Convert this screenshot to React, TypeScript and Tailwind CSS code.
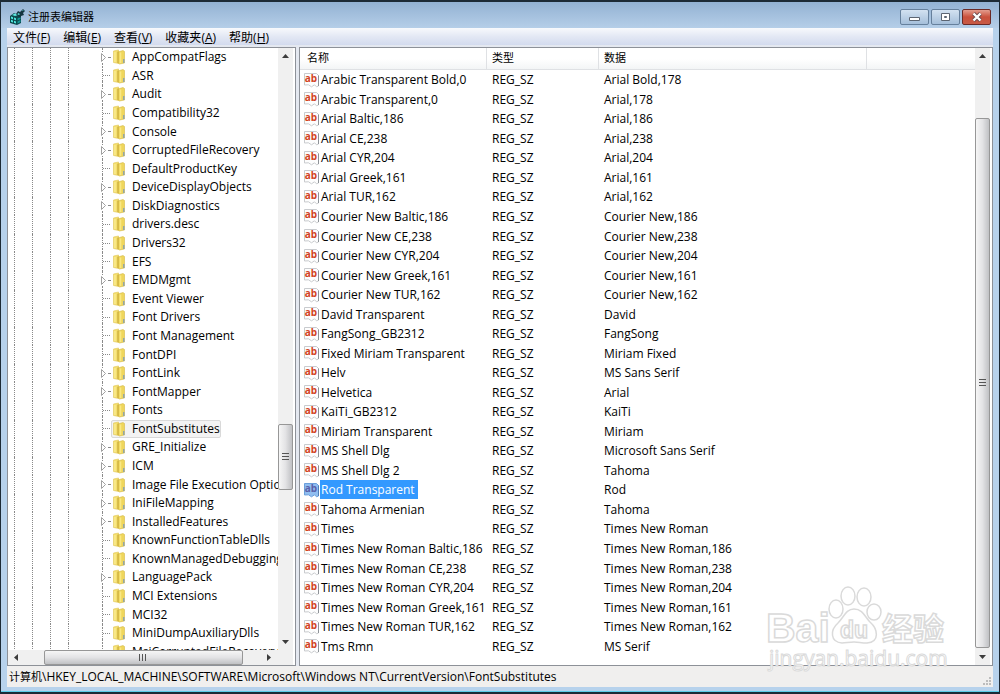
import { clsx } from "clsx";

type TreeItem = { name: string; expandable?: boolean };

const menus = [
  { label: "文件", key: "F" },
  { label: "编辑", key: "E" },
  { label: "查看", key: "V" },
  { label: "收藏夹", key: "A" },
  { label: "帮助", key: "H" },
];

const tree: TreeItem[] = [
  { name: "AppCompatFlags", expandable: true },
  { name: "ASR" },
  { name: "Audit", expandable: true },
  { name: "Compatibility32" },
  { name: "Console", expandable: true },
  { name: "CorruptedFileRecovery", expandable: true },
  { name: "DefaultProductKey" },
  { name: "DeviceDisplayObjects", expandable: true },
  { name: "DiskDiagnostics", expandable: true },
  { name: "drivers.desc" },
  { name: "Drivers32" },
  { name: "EFS" },
  { name: "EMDMgmt", expandable: true },
  { name: "Event Viewer" },
  { name: "Font Drivers" },
  { name: "Font Management" },
  { name: "FontDPI" },
  { name: "FontLink", expandable: true },
  { name: "FontMapper", expandable: true },
  { name: "Fonts" },
  { name: "FontSubstitutes" },
  { name: "GRE_Initialize", expandable: true },
  { name: "ICM", expandable: true },
  { name: "Image File Execution Options", expandable: true },
  { name: "IniFileMapping", expandable: true },
  { name: "InstalledFeatures", expandable: true },
  { name: "KnownFunctionTableDlls" },
  { name: "KnownManagedDebuggingDlls" },
  { name: "LanguagePack", expandable: true },
  { name: "MCI Extensions" },
  { name: "MCI32" },
  { name: "MiniDumpAuxiliaryDlls" },
  { name: "MsiCorruptedFileRecovery" },
];

const values: [string, string][] = [
  ["Arabic Transparent Bold,0", "Arial Bold,178"],
  ["Arabic Transparent,0", "Arial,178"],
  ["Arial Baltic,186", "Arial,186"],
  ["Arial CE,238", "Arial,238"],
  ["Arial CYR,204", "Arial,204"],
  ["Arial Greek,161", "Arial,161"],
  ["Arial TUR,162", "Arial,162"],
  ["Courier New Baltic,186", "Courier New,186"],
  ["Courier New CE,238", "Courier New,238"],
  ["Courier New CYR,204", "Courier New,204"],
  ["Courier New Greek,161", "Courier New,161"],
  ["Courier New TUR,162", "Courier New,162"],
  ["David Transparent", "David"],
  ["FangSong_GB2312", "FangSong"],
  ["Fixed Miriam Transparent", "Miriam Fixed"],
  ["Helv", "MS Sans Serif"],
  ["Helvetica", "Arial"],
  ["KaiTi_GB2312", "KaiTi"],
  ["Miriam Transparent", "Miriam"],
  ["MS Shell Dlg", "Microsoft Sans Serif"],
  ["MS Shell Dlg 2", "Tahoma"],
  ["Rod Transparent", "Rod"],
  ["Tahoma Armenian", "Tahoma"],
  ["Times", "Times New Roman"],
  ["Times New Roman Baltic,186", "Times New Roman,186"],
  ["Times New Roman CE,238", "Times New Roman,238"],
  ["Times New Roman CYR,204", "Times New Roman,204"],
  ["Times New Roman Greek,161", "Times New Roman,161"],
  ["Times New Roman TUR,162", "Times New Roman,162"],
  ["Tms Rmn", "MS Serif"],
];

function RegeditIcon() {
  return (
    <svg width="16" height="16" viewBox="0 0 16 16" className="shrink-0">
      <path d="M1 7l4-3 7 3v7l-4 2-7-2z" fill="#0b4a4e" />
      <path d="M2 7.5l2 .7v2l-2-.7zM5 8.5l2 .7v2l-2-.7zM2 10.8l2 .7v2l-2-.7zM5 11.800l2 .7v2l-2-.7z" fill="#4fe6de" />
      <path d="M8.5 9.500l3-1.5v2l-3 1.5zM8.5 12.500l3-1.5v2l-3 1.5z" fill="#149a98" />
      <path d="M3 6l3-1.500 3 1.500-3 1z" fill="#5fe8e0" />
      <path d="M7 5l2-3 2 1 3-3 2 2-2 2 1 2-3 1-1 2-2-2z" fill="#143640" />
      <path d="M9 4l2 1-1 1-1.500-.5zM13 2l1-1 .5 1z" fill="#57dcd6" />
    </svg>
  );
}

function FolderIcon() {
  return (
    <svg width="14" height="16" viewBox="0 0 14 16" className="shrink-0">
      <path d="M1.500 2l5-1v13.500l-5-1z" fill="#f4df6e" stroke="#e0c658" strokeWidth=".6" />
      <path d="M6 3l5-1.500 1.500 1V14l-5 1-1.500-1z" fill="#efd65c" stroke="#d3b848" strokeWidth=".6" />
      <path d="M6 2.500V14" stroke="#c9a937" />
      <path d="M3 3v10" stroke="#fcf0a0" />
      <path d="M8.500 3.500v10.500" stroke="#f9e885" strokeWidth="1.500" />
      <path d="M11 10h1.500v4H11z" fill="#93a6a6" />
    </svg>
  );
}

function StringIcon({ selected }: { selected: boolean }) {
  return (
    <svg width="16" height="16" viewBox="0 0 16 16" className="shrink-0">
      <path
        d="M.5 1.500h12l2 2V14l-2 .8-2-2-3 2-3-2-4 .2z"
        fill={selected ? "#8fbdf0" : "#fdfdfd"}
        stroke={selected ? "#6a9fdc" : "#c9cbce"}
      />
      <path d="M14.500 3.500v10.500" stroke={selected ? "#4f7fb8" : "#8e9297"} />
      <text
        x="7"
        y="10"
        textAnchor="middle"
        fontSize="10"
        fontWeight="700"
        fontFamily="Open Sans, sans-serif"
        fill={selected ? "#5a5fa8" : "#d2431f"}
      >
        ab
      </text>
    </svg>
  );
}

function Branch({ expandable }: { expandable?: boolean }) {
  return (
    <span className="flex w-[17px] shrink-0 flex-col self-stretch">
      <span className="ml-2 flex-1 border-l border-dotted border-[#8a8a8a]" />
      <svg width="17" height="11" viewBox="0 0 17 11">
        {expandable ? (
          <>
            <path d="M7.5 1.5v8l4-4z" fill="#fff" stroke="#a0a0a0" />
            <path d="M14 5.5h3" stroke="#8a8a8a" />
          </>
        ) : (
          <>
            <path d="M8.5 0v11" stroke="#8a8a8a" strokeDasharray="1 1" />
            <path d="M9 5.5h8" stroke="#8a8a8a" strokeDasharray="1 1" />
          </>
        )}
      </svg>
      <span className="ml-2 flex-1 border-l border-dotted border-[#8a8a8a]" />
    </span>
  );
}

function TreeRow({ item }: { item: TreeItem }) {
  const selected = item.name === "FontSubstitutes";
  return (
    <li className="flex min-h-0 flex-1 items-center pl-[6px]">
      <span className="w-[18px] shrink-0 self-stretch border-l border-dotted border-[#8a8a8a]" />
      <span className="w-[18px] shrink-0 self-stretch border-l border-dotted border-[#8a8a8a]" />
      <span className="w-[18px] shrink-0 self-stretch border-l border-dotted border-[#8a8a8a]" />
      <span className="w-[26px] shrink-0 self-stretch border-l border-dotted border-[#8a8a8a]" />
      <Branch expandable={item.expandable} />
      <button
        type="button"
        className={clsx(
          "flex h-[18px] shrink-0 items-center gap-[6px] rounded-xs border whitespace-nowrap",
          selected ? "border-[#d9d9d9] bg-[#f3f3f3]" : "border-transparent"
        )}
      >
        <FolderIcon />
        {item.name}
      </button>
    </li>
  );
}

const arrows = {
  up: "M1 6l3.5-4L8 6z",
  down: "M1 3l3.5 4L8 3z",
  left: "M6 1L2 4.5 6 8z",
  right: "M3 1l4 3.5L3 8z",
};

function ArrowButton({ dir }: { dir: keyof typeof arrows }) {
  return (
    <button
      type="button"
      aria-label={dir}
      className={clsx(
        "flex shrink-0 items-center justify-center",
        dir === "up" || dir === "down" ? "h-[17px]" : "w-[17px]"
      )}
    >
      <svg width="9" height="9" viewBox="0 0 9 9">
        <path d={arrows[dir]} fill="#3c3c3c" />
      </svg>
    </button>
  );
}

function VerticalThumb({ className }: { className: string }) {
  return (
    <div
      className={clsx(
        "flex items-center justify-center rounded-xs border border-[#979797] bg-linear-to-r from-[#f6f6f6] via-[#e3e3e5] to-[#c0c1c4]",
        className
      )}
    >
      <svg width="7" height="8" viewBox="0 0 7 8">
        <path d="M0 .5h7M0 3.5h7M0 6.5h7" stroke="#555" />
      </svg>
    </div>
  );
}

function TreePane() {
  return (
    <nav className="flex w-[289px] shrink-0 flex-col border border-[#8d9198] bg-white">
      <div className="flex min-h-0 flex-1">
        <div className="min-w-0 flex-1 overflow-hidden">
          <ul className="flex h-[613px] flex-col">
            {tree.map((item) => (
              <TreeRow key={item.name} item={item} />
            ))}
          </ul>
        </div>
        <div className="mr-[2px] flex w-[15px] flex-col bg-[#f0f0f0]">
          <ArrowButton dir="up" />
          <div className="flex-[360]" />
          <VerticalThumb className="flex-[64]" />
          <div className="flex-[144]" />
          <ArrowButton dir="down" />
        </div>
      </div>
      <div className="mr-[2px] flex h-[15px] shrink-0 bg-[#f0f0f0]">
        <ArrowButton dir="left" />
        <div className="flex-[19]" />
        <div className="flex flex-[200] items-center justify-center rounded-xs border border-[#979797] bg-linear-to-b from-[#f6f6f6] via-[#e3e3e5] to-[#c0c1c4]">
          <svg width="8" height="7" viewBox="0 0 8 7">
            <path d="M.5 0v7M3.5 0v7M6.5 0v7" stroke="#555" />
          </svg>
        </div>
        <div className="flex-[17]" />
        <ArrowButton dir="right" />
        <div className="w-[16px]" />
      </div>
    </nav>
  );
}

function ValuePane() {
  return (
    <main className="flex min-w-0 flex-1 border border-[#8d9198] bg-white">
      <div className="min-w-0 flex-1 overflow-hidden">
        <table className="h-[608px] w-full table-fixed border-separate border-spacing-0 text-left">
          <colgroup>
            <col className="w-[187px]" />
            <col className="w-[112px]" />
            <col className="w-[268px]" />
            <col />
          </colgroup>
          <thead>
            <tr className="h-[22px] bg-linear-to-b from-white from-50% to-[#f2f4f5] text-[11px]">
              <th className="border-r border-b border-[#dfe1e4] py-0 pl-[7px] font-normal">名称</th>
              <th className="border-r border-b border-[#dfe1e4] py-0 pl-[5px] font-normal">类型</th>
              <th className="border-r border-b border-[#dfe1e4] py-0 pl-[5px] font-normal">数据</th>
              <td className="border-b border-[#dfe1e4] p-0" />
            </tr>
          </thead>
          <tbody>
            {values.map(([name, data]) => {
              const selected = name === "Rod Transparent";
              return (
                <tr key={name}>
                  <td className="p-0 pl-[4px]">
                    <div className="flex h-[19px] items-center whitespace-nowrap">
                      <StringIcon selected={selected} />
                      <span className={clsx("px-px leading-[19px]", selected && "bg-[#3399ff] pr-[3px] text-white")}>
                        {name}
                      </span>
                    </div>
                  </td>
                  <td className="p-0 pl-[5px] leading-[19px]">REG_SZ</td>
                  <td className="p-0 pl-[5px] leading-[19px] whitespace-nowrap">{data}</td>
                  <td className="p-0" />
                </tr>
              );
            })}
          </tbody>
        </table>
      </div>
      <div className="mr-[2px] flex w-[15px] shrink-0 flex-col bg-[#f0f0f0]">
        <ArrowButton dir="up" />
        <div className="flex-[53]" />
        <VerticalThumb className="flex-[530]" />
        <ArrowButton dir="down" />
      </div>
    </main>
  );
}

function Watermark() {
  return (
    <svg
      width="200"
      height="110"
      viewBox="0 0 200 110"
      className="pointer-events-none absolute right-[49px] bottom-[12px]"
      fill="#fff"
      stroke="#dadada"
      strokeWidth="1.5"
    >
      <ellipse cx="86" cy="39" rx="7" ry="9" />
      <ellipse cx="98" cy="26" rx="7" ry="9" />
      <ellipse cx="114" cy="27" rx="7" ry="9" />
      <ellipse cx="124" cy="42" rx="7" ry="8" />
      <path d="M104 39c9 0 11 8 16 13 8 7 10 20-3 21-6 0-8-1-13-1s-8 1-12 1c-12-1-12-13-4-20 6-6 8-14 16-14z" />
      <g fontFamily="Liberation Sans, sans-serif" fontWeight="700">
        <text x="16" y="72" fontSize="41">Bai</text>
        <text x="90" y="68" fontSize="23">du</text>
      </g>
      <text x="132" y="70" fontSize="31" fontWeight="700" fontFamily="Noto Sans CJK SC, sans-serif">
        经验
      </text>
      <text x="19" y="96" fontSize="21" strokeWidth="1" fontFamily="Open Sans, sans-serif">
        jingyan.baidu.com
      </text>
    </svg>
  );
}

export default function App() {
  return (
    <div className="relative flex h-screen min-h-[400px] flex-col overflow-hidden border-x border-t-2 border-b-2 border-[#1d2b36] bg-[#b7d2ec] px-[6px] font-['Open_Sans','Noto_Sans_CJK_SC',sans-serif] text-[12px] text-black">
      {/* Title bar */}
      <header className="-mx-[6px] flex h-[26px] shrink-0 items-start justify-between bg-linear-to-b from-[#93b2d3] to-[#b5cee8] px-[8px]">
        <div className="flex h-[30px] items-center gap-[3px] text-[11px]">
          <RegeditIcon />
          <h1>注册表编辑器</h1>
        </div>
        <div className="flex gap-[2px] pt-[7px]">
          <button
            type="button"
            aria-label="最小化"
            className="flex h-[16px] w-[29px] items-center justify-center rounded-xs border border-[#66809c] bg-linear-to-b from-[#d3e2f1] to-[#a5bfda]"
          >
            <svg width="11" height="10" viewBox="0 0 11 10">
              <path d="M.5 5.5h10v3H.5z" fill="#fff" stroke="#5c6572" />
            </svg>
          </button>
          <button
            type="button"
            aria-label="最大化"
            className="flex h-[16px] w-[29px] items-center justify-center rounded-xs border border-[#66809c] bg-linear-to-b from-[#d3e2f1] to-[#a5bfda]"
          >
            <svg width="11" height="10" viewBox="0 0 11 10">
              <path d="M1.5 1.5h8v7h-8z" fill="#fff" stroke="#5c6572" />
              <path d="M4.5 4.5h2v1h-2z" fill="#9db5d0" stroke="#5c6572" />
            </svg>
          </button>
          <button
            type="button"
            aria-label="关闭"
            className="flex h-[16px] w-[29px] items-center justify-center rounded-xs border border-[#6b2a26] bg-linear-to-b from-[#e29c8e] via-[#c9503c] to-[#c85a45]"
          >
            <svg width="12" height="10" viewBox="0 0 12 10">
              <path d="M2.5 1.5l7 7M9.5 1.5l-7 7" stroke="#6a4a4e" strokeWidth="4" />
              <path d="M2.5 1.5l7 7M9.5 1.5l-7 7" stroke="#fff" strokeWidth="2.4" />
            </svg>
          </button>
        </div>
      </header>

      <div className="flex h-[17px] shrink-0 items-center gap-[13px] bg-linear-to-b from-[#f8f9fc] via-[#e3e8f4] to-[#d3dbee] pl-[6px] leading-[19px]">
        {menus.map((menu) => (
          <button key={menu.key} type="button" className="pt-px">
            {menu.label}(<span className="underline">{menu.key}</span>)
          </button>
        ))}
      </div>

      <div className="flex min-h-0 flex-1 gap-[3px] bg-[#e4e8f0] pt-[2px]">
        <TreePane />
        <ValuePane />
      </div>

      <footer className="flex h-[21px] shrink-0 items-center justify-between bg-[#f0efee] pl-[2px]">
        <span className="whitespace-nowrap">
          <span className="text-[11px]">计算机</span>
          \HKEY_LOCAL_MACHINE\SOFTWARE\Microsoft\Windows NT\CurrentVersion\FontSubstitutes
        </span>
        <svg width="10" height="10" viewBox="0 0 10 10" className="self-end">
          <path d="M6 0h2v2H6zM3 3h2v2H3zM6 3h2v2H6zM0 6h2v2H0zM3 6h2v2H3zM6 6h2v2H6z" fill="#bcbcbc" />
        </svg>
      </footer>
      <div className="-mx-[6px] h-[5px] shrink-0 border-b border-[#5ccbe6]" />

      <Watermark />
    </div>
  );
}
